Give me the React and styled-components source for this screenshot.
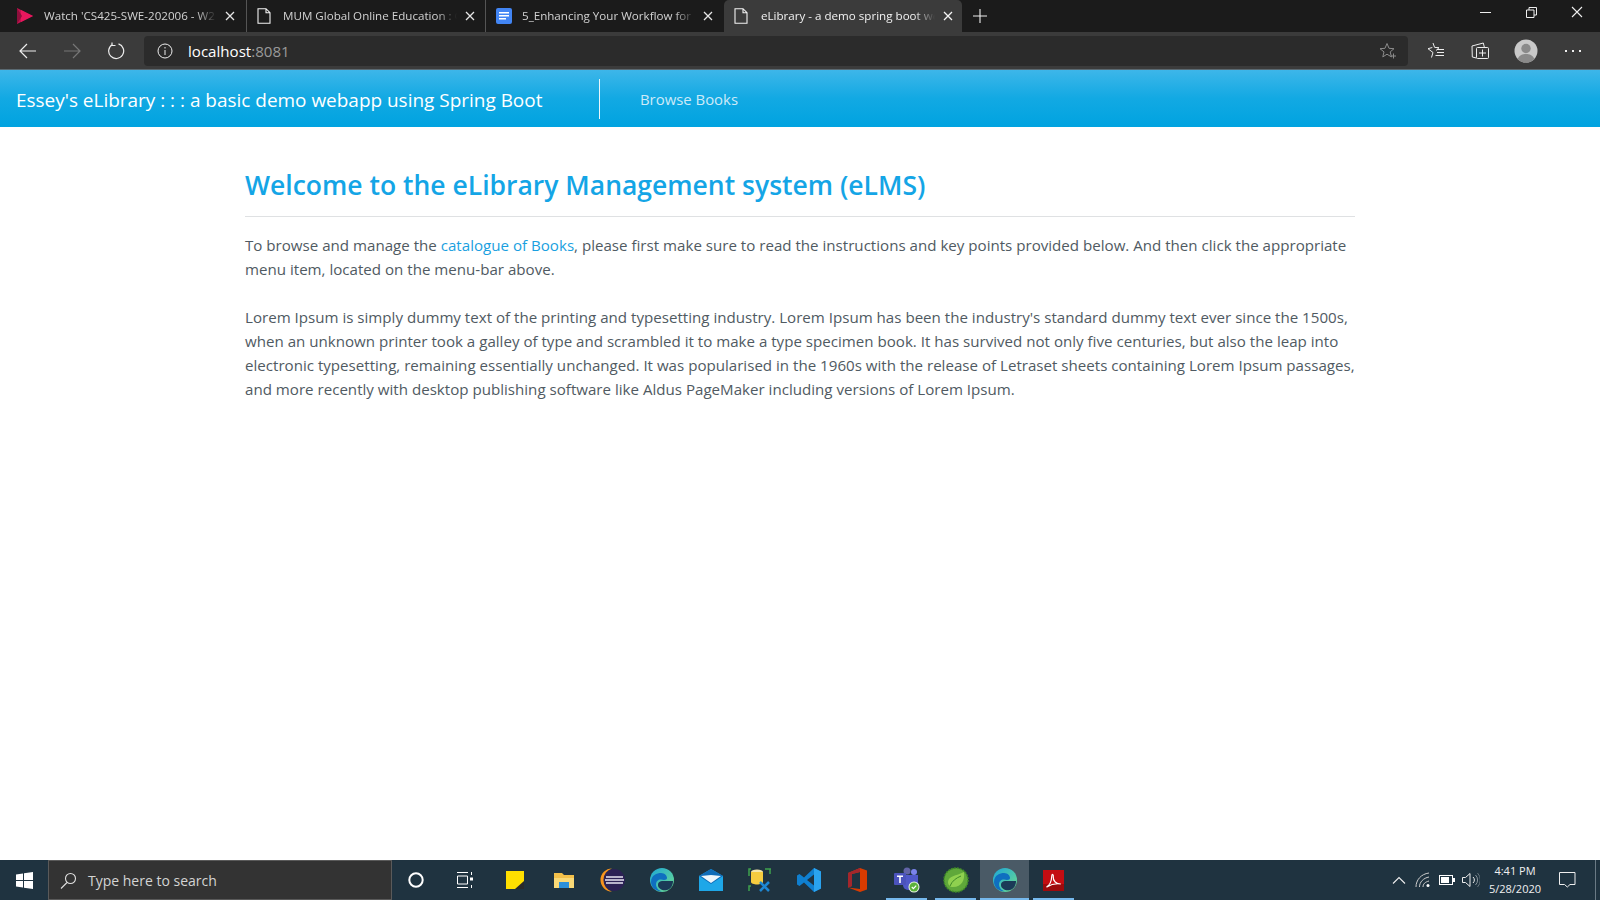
import React from 'react';
import styled, { createGlobalStyle } from 'styled-components';

const Global = createGlobalStyle`
    html, body { margin:0; padding:0; height:100%; background:#fff; }
    #root { height:100%; }
    * { box-sizing:border-box; }
`;

const Page = styled.div`
    width:1600px;
    height:900px;
    display:flex;
    flex-direction:column;
    overflow:hidden;
    font-family:"Open Sans", "Noto Sans", sans-serif;
`;

/* browser chrome */
const TabStrip = styled.div`
    height:32px;
    flex:none;
    display:flex;
    background:#1b1b1b;
`;

const Tab = styled.div`
    width:${props=>props.width}px;
    height:32px;
    display:flex;
    align-items:center;
    padding-left:${props=>props.pad || 16}px;
    border-radius:${props=>props.active ? "5px 5px 0 0" : "0"};
    background:${props=>props.active ? "#3b3b3b" : "transparent"};
    border-right:${props=>props.divider ? "1px solid #555" : "0"};
    background-clip:padding-box;
`;

const TabIcon = styled.div`
    width:18px;
    height:18px;
    flex:none;
    display:flex;
    align-items:center;
    justify-content:center;
    margin-right:${props=>props.space || 9}px;
`;

const TabTitle = styled.div`
    width:${props=>props.width}px;
    margin-top:-2px;
    font-size:11.6px;
    white-space:nowrap;
    color:${props=>props.active ? "#f2f2f2" : "#d2d2d2"};
    -webkit-mask-image:linear-gradient(90deg,#000 88%,transparent 100%);
    mask-image:linear-gradient(90deg,#000 88%,transparent 100%);
`;

const TabClose = styled.div`
    width:10px;
    height:10px;
    flex:none;
    margin-left:${props=>props.space || 7}px;
    display:flex;
`;

const NewTab = styled.div`
    width:36px;
    display:flex;
    align-items:center;
    justify-content:center;
`;

const WindowControls = styled.div`
    margin-left:auto;
    display:flex;
    align-items:flex-start;
`;

const WindowButton = styled.div`
    width:46px;
    height:24px;
    display:flex;
    align-items:center;
    justify-content:center;
`;

const Toolbar = styled.div`
    height:38px;
    flex:none;
    display:flex;
    align-items:center;
    background:#3b3b3b;
    padding-left:6px;
    border-bottom:1px solid #5b6a72;
`;

const ToolButton = styled.div`
    width:${props=>props.width || 44}px;
    height:30px;
    flex:none;
    display:flex;
    align-items:center;
    justify-content:center;
`;

const AddressBar = styled.div`
    width:1264px;
    margin-left:6px;
    margin-right:6px;
    height:30px;
    flex:none;
    display:flex;
    align-items:center;
    padding-left:13px;
    padding-right:12px;
    border-radius:4px;
    background:#2b2b2b;
`;

const Url = styled.div`
    margin-left:15px;
    font-size:15.1px;
    color:#fff;
    span { color:#9a9a9a; }
`;

const AddressEnd = styled.div`
    margin-left:auto;
    display:flex;
`;

/* site */
const Navbar = styled.nav`
    height:57px;
    flex:none;
    display:flex;
    align-items:center;
    background:linear-gradient(180deg,#3db6e9 0%,#12a9e3 50%,#00a3e0 100%);
    padding-left:16px;
`;

const Brand = styled.div`
    width:584px;
    height:40px;
    display:flex;
    align-items:center;
    padding-top:2px;
    font-size:18.97px;
    color:#fff;
    white-space:nowrap;
    border-right:1px solid #e8f6fc;
`;

const NavLink = styled.a`
    margin-left:40px;
    font-size:14.9px;
    color:#cdeaf8;
`;

const Main = styled.main`
    flex:1;
    width:1110px;
    margin:0 auto;
    padding-top:40px;
    color:#505a62;
`;

const Heading = styled.h1`
    margin:0;
    font-size:26.5px;
    line-height:37px;
    font-weight:600;
    color:#14a5e6;
    white-space:nowrap;
`;

const Rule = styled.hr`
    margin:12px 0 16px;
    border:0;
    border-top:1px solid #dfe1e3;
`;

const Para = styled.p`
    margin:0 0 24px;
    font-size:15.12px;
    line-height:24px;
    white-space:nowrap;
    a { color:#1a9fe0; }
`;

/* windows taskbar */
const Taskbar = styled.div`
    height:40px;
    flex:none;
    display:flex;
    align-items:center;
    background:#1f3340;
`;

const StartButton = styled.div`
    width:48px;
    height:40px;
    flex:none;
    display:flex;
    align-items:center;
    justify-content:center;
`;

const SearchBox = styled.div`
    width:344px;
    height:40px;
    flex:none;
    display:flex;
    align-items:center;
    padding-left:11px;
    background:#333;
    border:1px solid #5a5a5a;
    font-size:14px;
    color:#d4d4d4;
    span { margin-left:11px; }
`;

const Slot = styled.div`
    position:relative;
    width:49px;
    height:40px;
    flex:none;
    display:flex;
    align-items:center;
    justify-content:center;
    padding-right:${props=>props.nudge || 0}px;
    background:${props=>props.current ? "#4a5a66" : "transparent"};

    &::after{
        content:"";
        display:${props=>props.running ? "block" : "none"};
        position:absolute;
        left:${props=>props.current ? 0 : 4}px;
        right:${props=>props.current ? 0 : 4}px;
        bottom:0;
        height:2px;
        background:#76b9ed;
    }
`;

const Tray = styled.div`
    margin-left:auto;
    height:40px;
    display:flex;
    align-items:center;
`;

const TrayIcon = styled.div`
    width:${props=>props.width || 24}px;
    height:40px;
    display:flex;
    align-items:center;
    justify-content:center;
`;

const Clock = styled.div`
    width:66px;
    margin-left:2px;
    padding-right:6px;
    text-align:center;
    font-size:11px;
    line-height:18px;
    color:#f0f0f0;
    white-space:nowrap;
`;

const Notify = styled.div`
    width:42px;
    margin-left:2px;
    display:flex;
    justify-content:center;
    padding-right:14px;
`;

const ShowDesktop = styled.div`
    width:5px;
    height:40px;
    border-left:1px solid #6a7a85;
`;

const X = ({size=10, color="#e6e6e6"}) => (
    <svg width={size} height={size} viewBox="0 0 10 10"><path d="M1 1l8 8M9 1L1 9" stroke={color} strokeWidth="1.3" fill="none"/></svg>
);

const DocIcon = () => (
    <svg width="14" height="16" viewBox="0 0 14 16"><path d="M1 .7h8l4 4v10.600H1zM9 .7v4h4" fill="none" stroke="#f2f2f2" strokeWidth="1.100"/></svg>
);

const StreamIcon = () => (
    <svg width="18" height="18" viewBox="0 0 18 18">
        <path d="M1 1l16 8-16 8z" fill="#c3134f"/>
        <path d="M5 3l12 6-12 6z" fill="#e8175d"/>
        <path d="M1 1l5 8-5 8z" fill="#8e0f3c"/>
    </svg>
);

const GoogleDocIcon = () => (
    <svg width="16" height="16" viewBox="0 0 16 16">
        <rect width="16" height="16" rx="2" fill="#4285f4"/>
        <path d="M3 4h10v1.500H3zM3 7h10v1.500H3zM3 10h7v1.500H3z" fill="#fff"/>
    </svg>
);

const EdgeIcon = () => (
    <svg width="26" height="26" viewBox="0 0 26 26">
        <defs>
            <linearGradient id="edgeTop" x1="0" y1="0" x2="1" y2="1">
                <stop offset="0" stopColor="#1ca7d8"/>
                <stop offset="1" stopColor="#6fdc8c"/>
            </linearGradient>
        </defs>
        <circle cx="13" cy="13" r="12" fill="url(#edgeTop)"/>
        <path d="M2 15C2 8 8 6 12 6c4 0 6 3 6 5 0 1-1 2-3 2-1 0-2-.5-3-.5-3 0-5 2-5 5 0 3 3 7 7 7C6 24.500 2 20 2 15z" fill="#0f6fc0"/>
        <path d="M9 18c0-3 2-4 5-4h10c0 4-2 8-6 9-4 1-9-1-9-5z" fill="#1b3a57"/>
    </svg>
);

const taskApps = [
    <svg width="18" height="18" viewBox="0 0 18 18"><circle cx="9" cy="9" r="6.700" fill="none" stroke="#fff" strokeWidth="2"/></svg>,
    <svg width="16" height="18" viewBox="0 0 16 18"><path d="M0 1.500h11M0 16.500h11M.5 5h10v8H.5zM14.500 1v3M14.500 14v3" stroke="#fff" fill="none"/><rect x="13" y="6.500" width="3" height="3" fill="#fff"/></svg>,
    <svg width="18" height="18" viewBox="0 0 18 18"><rect width="18" height="18" fill="#ffdf00"/><path d="M18 10v8h-9z" fill="#2a2a2a"/></svg>,
    <svg width="22" height="20" viewBox="0 0 22 20"><path d="M1 3h8l2 2h10v13H1z" fill="#f3c04a"/><path d="M1 8h20v10H1z" fill="#f9d976"/><rect x="6" y="12" width="10" height="6" fill="#2c90d9"/></svg>,
    <svg width="26" height="26" viewBox="0 0 26 26"><circle cx="14" cy="13" r="11" fill="#2c2255"/><path d="M12 1.500A11.500 11.500 0 0 0 12 24.500 12 12 0 0 1 12 1.500z" fill="#f7941e"/><path d="M6 10h17M5 13h19M6 16h17" stroke="#e8e6f2" strokeWidth="1.500"/></svg>,
    <EdgeIcon/>,
    <svg width="24" height="24" viewBox="0 0 24 24"><path d="M0 8l12-7 12 7v15H0z" fill="#1ea7e8"/><path d="M0 8l12 8 12-8-12-7z" fill="#0f6cb8"/><path d="M2 8l10 7 10-7-10-1z" fill="#eef6fb"/></svg>,
    <svg width="24" height="24" viewBox="0 0 24 24"><path d="M1 8V1h2M23 1h-2M1 23v-5h2M17 1h5v5" fill="none" stroke="#3fa34d" strokeWidth="1.500"/><ellipse cx="9" cy="4" rx="6" ry="2.500" fill="#f5e6a8"/><path d="M3 4v10c0 1.500 3 2.500 6 2.500s6-1 6-2.500V4z" fill="#f6cc3f"/><path d="M12 14l9 9M21 14l-9 9" stroke="#1e88d4" strokeWidth="2.500"/></svg>,
    <svg width="24" height="24" viewBox="0 0 24 24"><path d="M17 0l7 3.500v17L17 24 7 14.500 2.500 18 0 16.500V7.500L2.500 6 7 9.500z" fill="#0f7fcf"/><path d="M17 6.500L10 12l7 5.500z" fill="#1f3340"/><path d="M17 0l7 3.500v17L17 24z" fill="#2aa3ee"/></svg>,
    <svg width="20" height="24" viewBox="0 0 20 24"><path d="M0 5l12-5 7 2.500v19L12 24 0 19.500l12 1.500V4L4 6v12l-4 1.500z" fill="#d83b01"/><path d="M0 5l12-5v4L4 6v12l-4 1.500z" fill="#a4262c"/></svg>,
    <svg width="26" height="26" viewBox="0 0 26 26"><circle cx="20" cy="5" r="3" fill="#7b83eb"/><circle cx="13" cy="4" r="3.500" fill="#6264a7"/><path d="M9 8h15v10a5 5 0 0 1-5 5h-5a5 5 0 0 1-5-5z" fill="#5059c9"/><rect x="0" y="6" width="12" height="12" rx="1" fill="#4b53bc"/><path d="M3 8.500h6v1.500H6.800v6H5.200v-6H3z" fill="#fff"/><circle cx="20" cy="20" r="5.500" fill="#e8f5e2"/><circle cx="20" cy="20" r="4.500" fill="#5cb23a"/><path d="M17.800 20l1.600 1.600 2.800-3" stroke="#fff" strokeWidth="1.200" fill="none"/></svg>,
    <svg width="26" height="26" viewBox="0 0 26 26"><circle cx="13" cy="13" r="12" fill="#5fa83a" stroke="#3f8a28" strokeWidth="1.500" strokeDasharray="2 1"/><path d="M21 5c1 8-2 15-11 15-3 0-5-2-5-5 0-6 8-6 16-10z" fill="#8fd14f"/><path d="M7 19c2-5 6-8 11-10" stroke="#3f8a28" fill="none"/></svg>,
    <EdgeIcon/>,
    <svg width="21" height="21" viewBox="0 0 21 21"><rect width="21" height="21" fill="#c40d12"/><rect y="14" width="21" height="7" fill="#9c0a0d"/><path d="M3.500 17c3-1.500 5-6 5.300-11 .2-2.500 1.800-2 1.500 1-.5 4 3 7 7.500 7-5-.8-10 .5-14 3z" fill="none" stroke="#fff" strokeWidth="1.200"/></svg>,
];

const App = () => {
    return(
        <Page>
            <Global/>
            <TabStrip>
                <Tab width={247} divider>
                    <TabIcon space={10}><StreamIcon/></TabIcon>
                    <TabTitle width={173}>Watch 'CS425-SWE-202006 - W2</TabTitle>
                    <TabClose space={8}><X/></TabClose>
                </Tab>
                <Tab width={239} divider pad={8}>
                    <TabIcon space={10}><DocIcon/></TabIcon>
                    <TabTitle width={174}>MUM Global Online Education : C</TabTitle>
                    <TabClose space={8}><X/></TabClose>
                </Tab>
                <Tab width={238} pad={9}>
                    <TabIcon space={9}><GoogleDocIcon/></TabIcon>
                    <TabTitle width={173}>5_Enhancing Your Workflow for S</TabTitle>
                    <TabClose space={8}><X/></TabClose>
                </Tab>
                <Tab width={238} active pad={8}>
                    <TabIcon space={11}><DocIcon/></TabIcon>
                    <TabTitle width={174} active>eLibrary - a demo spring boot we</TabTitle>
                    <TabClose space={8}><X color="#f5f5f5"/></TabClose>
                </Tab>
                <NewTab>
                    <svg width="14" height="14" viewBox="0 0 14 14"><path d="M7 0v14M0 7h14" stroke="#eee" strokeWidth="1.100"/></svg>
                </NewTab>
                <WindowControls>
                    <WindowButton><svg width="11" height="11" viewBox="0 0 11 11"><path d="M0 5.500h11" stroke="#eee"/></svg></WindowButton>
                    <WindowButton><svg width="11" height="11" viewBox="0 0 11 11"><path d="M.5 3h7.500v7.500H.5zM3 3V.5h7.500V8H8" fill="none" stroke="#eee"/></svg></WindowButton>
                    <WindowButton><svg width="12" height="12" viewBox="0 0 12 12"><path d="M1 1l10 10M11 1L1 11" stroke="#eee" strokeWidth="1.100"/></svg></WindowButton>
                </WindowControls>
            </TabStrip>
            <Toolbar>
                <ToolButton>
                    <svg width="18" height="16" viewBox="0 0 18 16"><path d="M17 8H1M8 1L1 8l7 7" fill="none" stroke="#eee" strokeWidth="1.200"/></svg>
                </ToolButton>
                <ToolButton>
                    <svg width="18" height="16" viewBox="0 0 18 16"><path d="M1 8h16M10 1l7 7-7 7" fill="none" stroke="#777" strokeWidth="1.200"/></svg>
                </ToolButton>
                <ToolButton>
                    <svg width="18" height="18" viewBox="0 0 18 18"><path d="M5.500 2.500a7.500 7.500 0 1 0 6-.6M5 .5v3h3.500" fill="none" stroke="#eee" strokeWidth="1.200"/></svg>
                </ToolButton>
                <AddressBar>
                    <svg width="16" height="16" viewBox="0 0 16 16"><circle cx="8" cy="8" r="7" fill="none" stroke="#eee"/><path d="M8 7v5M8 4v1.500" stroke="#eee"/></svg>
                    <Url>localhost<span>:8081</span></Url>
                    <AddressEnd>
                        <svg width="17" height="17" viewBox="0 0 17 17"><path d="M8 1.500l2 4.800 5 .4-3.800 3.200 1.200 5-4.400-2.700-4.200 2.700 1.200-5L1 6.700l5-.4z" fill="none" stroke="#8c8c8c"/><path d="M12 14h5M14.500 11.500v5" stroke="#8c8c8c"/></svg>
                    </AddressEnd>
                </AddressBar>
                <ToolButton>
                    <svg width="18" height="18" viewBox="0 0 18 18"><path d="M6 1l1.600 4.400L12 5.700 9 8.500M4.500 15.500L6 10.500 1 6.700l4.300-1.200" fill="none" stroke="#eee"/><path d="M10 7.500h7M10 10.500h7M8.500 13.500h8.500" stroke="#eee"/></svg>
                </ToolButton>
                <ToolButton>
                    <svg width="18" height="18" viewBox="0 0 18 18"><path d="M5 16L1 15 .7 4 12 1l1 4" fill="none" stroke="#eee" transform="translate(.3 0)"/><rect x="5.500" y="5.500" width="12" height="11" rx="1" fill="#3b3b3b" stroke="#eee"/><path d="M11.500 7.500v7M8 11h7" stroke="#eee"/></svg>
                </ToolButton>
                <ToolButton width={47}>
                    <svg width="24" height="24" viewBox="0 0 24 24">
                        <circle cx="12" cy="12" r="11.500" fill="#c9c9c9"/>
                        <circle cx="12" cy="9.500" r="4.700" fill="#8a8a8a"/>
                        <path d="M3.500 20c2-4 5-5 8.500-5s6.500 1 8.500 5a11.500 11.500 0 0 1-17 0z" fill="#8a8a8a"/>
                    </svg>
                </ToolButton>
                <ToolButton width={48}>
                    <svg width="16" height="4" viewBox="0 0 16 4"><path d="M0 1h2v2H0zM7 1h2v2H7zM14 1h2v2h-2z" fill="#eee"/></svg>
                </ToolButton>
            </Toolbar>
            <Navbar>
                <Brand>Essey's eLibrary : : : a basic demo webapp using Spring Boot</Brand>
                <NavLink>Browse Books</NavLink>
            </Navbar>
            <Main>
                <Heading>Welcome to the eLibrary Management system (eLMS)</Heading>
                <Rule/>
                <Para>
                    To browse and manage the <a>catalogue of Books</a>, please first make sure to read the instructions and key points provided below. And then click the appropriate<br/>
                    menu item, located on the menu-bar above.
                </Para>
                <Para>
                    Lorem Ipsum is simply dummy text of the printing and typesetting industry. Lorem Ipsum has been the industry's standard dummy text ever since the 1500s,<br/>
                    when an unknown printer took a galley of type and scrambled it to make a type specimen book. It has survived not only five centuries, but also the leap into<br/>
                    electronic typesetting, remaining essentially unchanged. It was popularised in the 1960s with the release of Letraset sheets containing Lorem Ipsum passages,<br/>
                    and more recently with desktop publishing software like Aldus PageMaker including versions of Lorem Ipsum.
                </Para>
            </Main>
            <Taskbar>
                <StartButton>
                    <svg width="17" height="17" viewBox="0 0 17 17"><path d="M0 2.400l7-1v6.600H0zM8 1.300L17 0v8H8zM0 9h7v6.600l-7-1zM8 9h9v8l-9-1.300z" fill="#fff"/></svg>
                </StartButton>
                <SearchBox>
                    <svg width="17" height="17" viewBox="0 0 17 17"><circle cx="10.500" cy="6.500" r="5" fill="none" stroke="#e0e0e0" strokeWidth="1.100"/><path d="M7 10.500L1 16.500" stroke="#e0e0e0" strokeWidth="1.100"/></svg>
                    <span>Type here to search</span>
                </SearchBox>
                {taskApps.map((icon,k)=>
                    <Slot key={k} running={k>=10} current={k===12} nudge={k<2 ? 2 : 0}>{icon}</Slot>
                )}
                <Tray>
                    <TrayIcon>
                        <svg width="14" height="8" viewBox="0 0 14 8"><path d="M1 7.500l6-6 6 6" fill="none" stroke="#eee" strokeWidth="1.100"/></svg>
                    </TrayIcon>
                    <TrayIcon>
                        <svg width="16" height="16" viewBox="0 0 16 16"><path d="M1 15C1 8 6 2 14 1M4.500 15c0-5 4-9 9.500-10M8 15c0-3 2-5 6-6" fill="none" stroke="#ccc"/><circle cx="13" cy="13.500" r="1.500" fill="#fff"/></svg>
                    </TrayIcon>
                    <TrayIcon>
                        <svg width="16" height="10" viewBox="0 0 16 10"><rect x=".5" y=".5" width="13" height="9" fill="none" stroke="#fff"/><rect x="2" y="2" width="8" height="6" fill="#fff"/><rect x="14" y="3" width="2" height="4" fill="#fff"/></svg>
                    </TrayIcon>
                    <TrayIcon>
                        <svg width="18" height="16" viewBox="0 0 18 16"><path d="M.5 5.500h3L8 1.500v13l-4.500-4h-3z" fill="none" stroke="#eee"/><path d="M11 5a4 4 0 0 1 0 6" fill="none" stroke="#eee"/><path d="M13.500 3a7 7 0 0 1 0 10" fill="none" stroke="#8a959c"/><path d="M15.500 1a10 10 0 0 1 0 14" fill="none" stroke="#66747d"/></svg>
                    </TrayIcon>
                    <Clock>4:41 PM<br/>5/28/2020</Clock>
                    <Notify>
                        <svg width="17" height="16" viewBox="0 0 17 16"><path d="M.5.500h15.500v12h-5l-2.700 2.500-2.800-2.500H.5z" fill="none" stroke="#eee"/></svg>
                    </Notify>
                    <ShowDesktop/>
                </Tray>
            </Taskbar>
        </Page>
    )
}

export default App;
